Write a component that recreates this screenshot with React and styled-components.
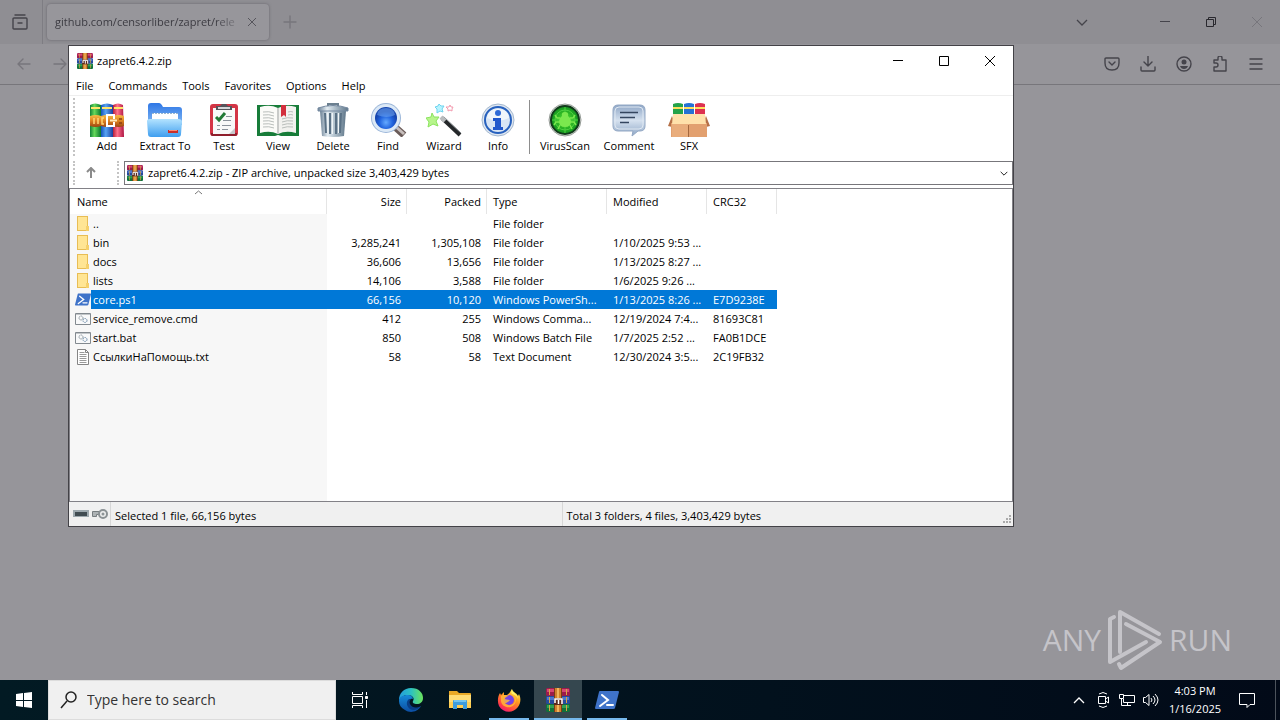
import React from 'react';
import styled, { createGlobalStyle } from 'styled-components';

const GlobalStyle = createGlobalStyle`
  * {
    box-sizing: border-box;
  }

  body {
    margin: 0;
    font-family: 'Open Sans', 'Noto Sans', sans-serif;
    font-size: 11px;
    line-height: 16px;
    color: #000;
  }

  button,
  select,
  input {
    margin: 0;
    padding: 0;
    border: 0;
    background: transparent;
    font: inherit;
    color: inherit;
  }

  svg {
    display: block;
    flex: none;
  }
`;

const Page = styled.div`
  display: flex;
  flex-direction: column;
  height: 100vh;
  overflow: hidden;
`;

const Desktop = styled.main`
  position: relative;
  flex: 1;
  min-height: 0;
  background: #96959a;
`;

/* Dimmed browser behind the archive window */

const TabStrip = styled.div`
  display: flex;
  height: 44px;
  background: #8f8e93;
  color: #3c3b42;
`;

const BrowserButton = styled.button`
  display: flex;
  align-items: center;
  justify-content: center;
  width: ${(props) => props.$width || 36}px;
  height: 100%;
  color: ${(props) => (props.$faint ? '#77767c' : '#45444b')};
`;

const ViewButton = styled(BrowserButton)`
  padding-right: 2px;
  border-right: 1px solid #7e7d83;
`;

const Tab = styled.div`
  display: flex;
  align-items: center;
  width: 222px;
  margin: 4px 3px 4px 4px;
  padding: 0 9px 0 8px;
  border-radius: 4px;
  background: #97969b;
  box-shadow: 0 0 3px #66656b;
`;

const TabTitle = styled.span`
  flex: 1;
  white-space: nowrap;
  mask-image: linear-gradient(to right, #000 85%, transparent);
`;

const Spacer = styled.div`
  flex: 1;
`;

const WindowControls = styled.div`
  display: flex;
  margin-left: 42px;
`;

const BrowserBar = styled.div`
  display: flex;
  height: 41px;
  padding: 0 6px;
  border-bottom: 1px solid #77767b;
  background: #96959a;
`;

const Watermark = styled.div`
  position: absolute;
  right: 48px;
  bottom: 8px;
  display: flex;
  align-items: center;
  gap: 6px;
  height: 64px;
  color: #c5c4c9;
  font-size: 30px;
  font-weight: 400;
  line-height: 64px;
`;

/* Archive window */

const Window = styled.section`
  position: absolute;
  inset: 45px 266px 153px 68px;
  display: flex;
  flex-direction: column;
  border: 1px solid #434247;
  background: #fff;
`;

const TitleBar = styled.header`
  display: flex;
  align-items: center;
  height: 30px;
  padding-left: 8px;
`;

const Title = styled.h1`
  flex: 1;
  margin: 0;
  padding-left: 4px;
  font-size: 11px;
  font-weight: 400;
`;

const CaptionButton = styled.button`
  display: flex;
  align-items: center;
  justify-content: center;
  width: 46px;
  height: 30px;
`;

const MenuBar = styled.nav`
  display: flex;
  height: 20px;
  gap: 15px;
  padding-left: 7px;
  border-bottom: 1px solid #eee;
`;

const ToolBar = styled.div`
  display: flex;
  height: 62px;
  padding: 2px 0 2px 4px;
`;

const Grip = styled.span`
  width: 0;
  margin-right: ${(props) => props.$gap || 0}px;
  border-left: 2px dotted #c4c4c4;
`;

const ToolButton = styled.button`
  display: flex;
  flex-direction: column;
  align-items: center;
  gap: 1px;
  width: ${(props) => props.$width}px;
  padding-top: 5px;
  white-space: nowrap;
`;

const ToolSeparator = styled.span`
  width: 1px;
  margin: 2px 4px 2px 5px;
  background: #8d8d8d;
`;

const AddressRow = styled.div`
  display: flex;
  height: 30px;
  padding: 3px 0 3px 4px;
`;

const UpButton = styled.button`
  display: flex;
  align-items: center;
  justify-content: center;
  width: 32px;
  margin-right: 10px;
`;

const AddressBox = styled.label`
  display: flex;
  align-items: center;
  flex: 1;
  gap: 5px;
  padding: 0 4px 0 2px;
  border: 1px solid #77767b;
`;

const AddressSelect = styled.select`
  flex: 1;
  height: 20px;
  appearance: none;
  outline: 0;
`;

const FileList = styled.div`
  flex: 1;
  min-height: 0;
  overflow: hidden;
  border: 1px solid #828187;
  background: linear-gradient(#f7f7f7, #f7f7f7) 0 0 / 257px 100% no-repeat #fff;
`;

const Table = styled.table`
  width: 707px;
  table-layout: fixed;
  border-collapse: separate;
  border-spacing: 0;
  white-space: nowrap;
`;

const HeaderCell = styled.th`
  position: relative;
  height: 25px;
  padding: 0 5px 0 ${(props) => (props.$first ? 7 : 6)}px;
  border-right: 1px solid #e5e5e5;
  background: #fff;
  font-weight: 400;
  text-align: ${(props) => props.$align || 'left'};
`;

const SortMark = styled.svg`
  position: absolute;
  top: 1px;
  left: calc(50% - 4px);
`;

const Row = styled.tr`
  height: 19px;
  color: ${(props) => (props.$selected ? '#fff' : '#000')};
`;

const Cell = styled.td`
  height: 19px;
  padding: 0 6px;
  text-align: ${(props) => props.$align || 'left'};
  background: ${(props) => (props.$selected ? '#0078d7' : 'transparent')};
`;

const NameCell = styled.td`
  height: 19px;
  padding: 0 0 0 5px;
`;

const NameBox = styled.div`
  display: flex;
  align-items: center;
  height: 19px;
`;

const FileName = styled.span`
  flex: 1;
  padding-left: 2px;
  line-height: 19px;
  background: ${(props) => (props.$selected ? '#0078d7' : 'transparent')};
`;

const StatusBar = styled.footer`
  display: flex;
  height: 24px;
  background: #f0f0f0;
`;

const StatusIcons = styled.div`
  display: flex;
  align-items: center;
  gap: 3px;
  width: 41px;
  padding-left: 4px;
`;

const StatusText = styled.div`
  display: flex;
  justify-content: space-between;
  flex: 1;
  padding-left: 4px;
  border-left: 1px solid #d7d7d7;
  line-height: 27px;
`;

const SizeGrip = styled.svg`
  align-self: flex-end;
`;

/* Taskbar */

const TaskBar = styled.footer`
  display: flex;
  height: 40px;
  background: linear-gradient(to right, #021a23, #02111d 60%, #020a18);
  color: #fff;
`;

const TaskButton = styled.button`
  display: flex;
  align-items: center;
  justify-content: center;
  width: ${(props) => props.$width || 48}px;
  height: 40px;
  background: ${(props) => (props.$active ? '#35474f' : 'transparent')};
`;

const SearchBox = styled.label`
  display: flex;
  align-items: center;
  gap: 10px;
  width: 288px;
  padding-left: 11px;
  border: 1px solid #dcdcdc;
  background: #f0f0f0;
  color: #222;
`;

const SearchInput = styled.input`
  width: 230px;
  outline: 0;
  font-size: 14px;
  line-height: 20px;

  &::placeholder {
    color: #333;
    opacity: 1;
  }
`;

const RunningApps = styled.div`
  display: flex;
  gap: 1px;
  margin-left: 3px;
`;

const AppButton = styled(TaskButton)`
  position: relative;

  &::after {
    content: '';
    position: absolute;
    bottom: 0;
    left: ${(props) => (props.$active ? 0 : 4)}px;
    right: ${(props) => (props.$active ? 0 : 4)}px;
    height: 2px;
    background: ${(props) => (props.$running ? '#76b9ed' : 'transparent')};
  }
`;

const Clock = styled.time`
  width: 64px;
  padding-top: 2px;
  text-align: center;
  line-height: 18px;
`;

const ShowDesktop = styled.button`
  width: 5px;
  margin-left: 8px;
  border-left: 1px solid #4c535c;
`;

/* Icons */

function WinrarIcon({ size }) {
  return (
    <svg width={size} height={size} viewBox="0 0 24 24">
      <path fill="#9c1c4c" d="M1 0h22l1 2v5l-1 1H1L0 7V1z" />
      <path fill="#d64674" d="M1 1h22v3H1z" />
      <path fill="#274a9c" d="M1 8h22l1 1v6l-1 1H1l-1-1V9z" />
      <path fill="#4d76cf" d="M1 9h22v3H1z" />
      <path fill="#11703a" d="M1 16h22l1 1v6l-1 1H1l-1-1v-6z" />
      <path fill="#2fa052" d="M1 17h22v3H1z" />
      <path fill="#d9a544" d="M3 1h1v6H3zm0 8h1v6H3zm0 8h1v6H3zM20 1h1v6h-1zm0 8h1v6h-1zm0 8h1v6h-1z" />
      <path fill="#7c3b17" d="M8 0h8v24H8z" />
      <path fill="#cf7f2e" d="M9 0h6v24H9z" />
      <path fill="#f0b45c" d="M11 0h2v24h-2z" />
      <path fill="#5c2a1c" d="M8 10h9v7H8z" />
      <path fill="none" stroke="#fff" strokeWidth="1.500" d="M9 15v-4h7v5M12.500 12v4" />
    </svg>
  );
}

function AddIcon() {
  return (
    <svg width="34" height="34" viewBox="0 0 34 34">
      <defs>
        <linearGradient id="addGreen">
          <stop offset="0" stopColor="#12813a" />
          <stop offset=".4" stopColor="#66d85a" />
          <stop offset="1" stopColor="#08762e" />
        </linearGradient>
        <linearGradient id="addBlue">
          <stop offset="0" stopColor="#1452b9" />
          <stop offset=".4" stopColor="#57a3f3" />
          <stop offset="1" stopColor="#1a3d9d" />
        </linearGradient>
        <linearGradient id="addRed">
          <stop offset="0" stopColor="#b51f39" />
          <stop offset=".4" stopColor="#ff728c" />
          <stop offset="1" stopColor="#ae1544" />
        </linearGradient>
        <linearGradient id="addBelt" x2="0" y2="1">
          <stop offset="0" stopColor="#f5bd47" />
          <stop offset=".5" stopColor="#dd8020" />
          <stop offset="1" stopColor="#9b4513" />
        </linearGradient>
      </defs>
      <path fill="url(#addGreen)" d="M0 2q5-3 11 0v32H0z" />
      <path fill="url(#addBlue)" d="M11 2q6-3 12 0v32H11z" />
      <path fill="url(#addRed)" d="M23 2q5-3 10 0l1 32H23z" />
      <path fill="#ffe66b" d="M1 4h9v2H1zm11 0h10v2H12zm12 0h9v2h-9z" />
      <path fill="url(#addBelt)" d="M0 13q6-2 11 0 6-2 12 0 6-2 11 0v10q-5 2-11 0-6 2-12 0-5 2-11 0z" />
      <path fill="none" stroke="#ffd676" strokeWidth="1.500" d="M4 15v6M8 15v6M14 15h-2v6h2" />
      <path fill="none" stroke="#fff" strokeWidth="2" d="M24 16v-4h-7v11h7v-4" />
      <path stroke="#ffe9b8" strokeWidth="2" d="M20 17.500h7" />
      <path stroke="#8a3f12" strokeWidth="1.500" d="M29 16h3M29 20h3" />
    </svg>
  );
}

function ExtractIcon() {
  return (
    <svg width="38" height="34" viewBox="0 0 38 34">
      <defs>
        <linearGradient id="extractBack" x2="0" y2="1">
          <stop offset="0" stopColor="#2e77e6" />
          <stop offset="1" stopColor="#82b9f4" />
        </linearGradient>
        <linearGradient id="extractFront" x2="0" y2="1">
          <stop offset="0" stopColor="#b3e3ff" />
          <stop offset="1" stopColor="#3e9eef" />
        </linearGradient>
      </defs>
      <path fill="url(#extractBack)" d="M2 3q0-3 3-3h8q2 0 4 4h16q3 0 3 3v15H2z" />
      <path fill="#fff" d="M6 10h26v9H6z" />
      <path fill="none" stroke="#97b5cf" strokeDasharray="2 1" d="M6 10.500h26" />
      <path fill="url(#extractFront)" d="M1 18q0-2 3-2h28q4 0 4 3l-1 12q0 3-3 3H5q-3 0-3-3z" />
      <path fill="#c9302a" d="M22 27h10v3H22z" />
      <path fill="#ff8a75" d="M23 27h8v1h-8z" />
    </svg>
  );
}

function TestIcon() {
  return (
    <svg width="30" height="34" viewBox="0 0 30 34">
      <rect x="1" y="1" width="28" height="32" rx="3" fill="#d33545" />
      <path fill="#8f1f2c" d="M2 30h26v2q0 1-2 1H4q-2 0-2-1z" />
      <path fill="#f8f9f8" d="M4 5h22v26H4z" />
      <path fill="#c6c9cb" d="m26 25-6 6h6z" />
      <path fill="#55555b" d="M7 3h4l2-2h4l2 2h4v4H7z" />
      <path fill="#d5d7da" d="M9 4h12v2H9z" />
      <path fill="none" stroke="#227a35" strokeWidth="3" d="m7 14 3 3 6-7" />
      <path stroke="#8a929a" d="M17 13.500h6M14 17.500h8M8 22.500h3M13 22.500h9M8 26.500h3M13 26.500h6" />
    </svg>
  );
}

function ViewIcon() {
  return (
    <svg width="42" height="34" viewBox="0 0 42 34">
      <path fill="#177c39" d="M0 2h42v31H24l-3-1-3 1H0z" />
      <path fill="#fbfbf8" d="M3 4q10-3 18 1v26q-8-4-18-1z" />
      <path fill="#f2f2ef" d="M39 4q-10-3-18 1v26q8-4 18-1z" />
      <path fill="#c9cbc9" d="M20 5h2v26h-2z" />
      <path fill="none" stroke="#b9bebb" d="M6 9q6-1 11 1M6 12q6-1 11 1M6 15q6-1 11 1M6 18q6-1 11 1M6 21q6-1 11 1M6 24q6-1 11 1M25 16q5-2 11-1M25 19q5-2 11-1M25 22q5-2 11-1M25 25q5-2 11-1M31 9q3-1 5 0M31 12q3-1 5 0" />
      <path fill="#d22f3d" d="M24 2h5v12l-2-2-3 2z" />
    </svg>
  );
}

function DeleteIcon() {
  return (
    <svg width="32" height="34" viewBox="0 0 32 34">
      <defs>
        <linearGradient id="binMetal">
          <stop offset="0" stopColor="#6b8195" />
          <stop offset=".3" stopColor="#e3ecf2" />
          <stop offset=".6" stopColor="#a9bac6" />
          <stop offset="1" stopColor="#60778a" />
        </linearGradient>
      </defs>
      <path fill="url(#binMetal)" d="M3 8h26l-2 25q-11 2-22 0z" />
      <path fill="none" stroke="#5a7185" strokeWidth="2" d="m8 10 1 20M13 10v21M19 10v21M24 10l-1 20" />
      <path stroke="#eff5f7" d="m10.500 10 .5 20M15.500 10v21M21.500 10v20" />
      <path fill="none" stroke="#6c8090" strokeWidth="2" d="M11 4V1h10v3" />
      <path fill="url(#binMetal)" stroke="#7589a0" d="M1 8V5q15-5 30 0v3z" />
    </svg>
  );
}

function FindIcon() {
  return (
    <svg width="38" height="34" viewBox="0 0 38 34">
      <defs>
        <radialGradient id="findGlass" cx=".5" cy=".7">
          <stop offset="0" stopColor="#65aaff" />
          <stop offset=".6" stopColor="#2164de" />
          <stop offset="1" stopColor="#1645ae" />
        </radialGradient>
      </defs>
      <path stroke="#6a5b58" strokeWidth="7" d="m26 24 9 8" />
      <path stroke="#c7bfbd" strokeWidth="3" d="m26 23 9 8" />
      <circle cx="17" cy="15" r="15" fill="#9bb6d9" />
      <circle cx="17" cy="15" r="14" fill="#dce9f6" />
      <circle cx="17" cy="15" r="11" fill="url(#findGlass)" />
      <path fill="#77aff6" opacity=".5" d="M8 12q1-7 9-7t9 7q-8 4-18 0" />
    </svg>
  );
}

function WizardIcon() {
  return (
    <svg width="36" height="34" viewBox="0 0 36 34">
      <path stroke="#25282a" strokeWidth="4" d="m16 15 18 17" />
      <path stroke="#868b8f" strokeWidth="1" d="m18 14 17 16" />
      <path stroke="#b8bbbd" strokeWidth="4" d="m15 14 4 4" />
      <path fill="#b7f58b" stroke="#8be35f" d="m6 10 2 4 5 0-3 4 2 5-5-2-5 3 1-5-3-4 5-1z" />
      <path fill="#b7f4ff" stroke="#6fd3ee" d="m13 1 2 2 3 0-2 3 1 3-3-1-3 2v-4l-2-2 3-1z" />
      <path fill="#fff" stroke="#f29aae" d="m24 2 1 2 2 0-1 2v2l-2-1-2 1v-2l-2-2h3z" />
    </svg>
  );
}

function InfoIcon() {
  return (
    <svg width="34" height="34" viewBox="0 0 34 34">
      <circle cx="17" cy="17" r="16" fill="#dfe7f1" stroke="#a4b8cf" />
      <circle cx="17" cy="17" r="13" fill="#d8e5f5" stroke="#2761be" strokeWidth="2" />
      <path fill="#f1f6fb" d="M6 15Q7 6 17 6t11 9q-11 5-22 0" />
      <circle cx="17" cy="10" r="3" fill="#2f6ad6" />
      <path fill="#2158cc" d="M12 15h8v9h2v3H12v-3h2v-6h-2z" />
    </svg>
  );
}

function VirusIcon() {
  return (
    <svg width="34" height="34" viewBox="0 0 34 34">
      <defs>
        <radialGradient id="virusGlow">
          <stop offset="0" stopColor="#5be83a" />
          <stop offset=".6" stopColor="#2bb324" />
          <stop offset="1" stopColor="#129421" />
        </radialGradient>
      </defs>
      <circle cx="17" cy="17" r="16" fill="#e1e4e1" stroke="#959b96" />
      <circle cx="17" cy="17" r="14" fill="url(#virusGlow)" stroke="#123b1b" strokeWidth="2" />
      <path stroke="#4fd141" fill="none" d="M17 4v26M4 17h26" />
      <circle cx="17" cy="17" r="10" stroke="#4fd141" fill="none" />
      <path fill="#7be84e" d="M14 13q-1-4 3-4t3 4q3 2 3 5 0 6-6 6t-6-6q0-3 3-5" />
      <path fill="none" stroke="#7be84e" strokeWidth="1.500" d="M12 15H9l-2-3M12 19H8l-2 3M12 22l-2 4M22 15h3l2-3M22 19h4l2 3M22 22l2 4" />
    </svg>
  );
}

function CommentIcon() {
  return (
    <svg width="34" height="34" viewBox="0 0 34 34">
      <defs>
        <linearGradient id="commentFill" x2="0" y2="1">
          <stop offset="0" stopColor="#8ea6c6" />
          <stop offset=".5" stopColor="#d5e1ef" />
          <stop offset="1" stopColor="#8fa7c6" />
        </linearGradient>
      </defs>
      <path fill="url(#commentFill)" stroke="#93a8c4" d="M6 2h22q5 0 5 5v16q0 5-5 5h-2l-6 5 1-5H6q-5 0-5-5V7q0-5 5-5z" />
      <path fill="none" stroke="#dfe8f2" d="M7 4h20q4 0 4 4v14q0 4-4 4H7q-4 0-4-4V8q0-4 4-4z" />
      <path stroke="#34465f" strokeWidth="1.500" d="M8 9.500h18M8 14.500h15M8 19.500h9" />
    </svg>
  );
}

function SfxIcon() {
  return (
    <svg width="42" height="34" viewBox="0 0 42 34">
      <path fill="#25a34a" d="M5 1q5-2 10 0v14H5z" />
      <path fill="#2672d5" d="M16 1q5-2 10 0v14H16z" />
      <path fill="#dd3150" d="M27 1q5-2 10 0v14H27z" />
      <path fill="#ffe05f" d="M5 4h10v2H5zm11 0h10v2H16zm11 0h10v2H27z" />
      <path fill="#b57047" d="m4 13 2 5-2 6-4-1zM38 13l-2 5 2 6 4-1z" />
      <path fill="#e2a06f" d="M3 20h36v14H3z" />
      <path fill="#e9ad7c" d="M4 21h17v13H4z" />
      <path fill="#ffe1ab" d="M5 11h32l1 10H4z" />
      <path stroke="#a4683e" d="M20.500 22v12" />
    </svg>
  );
}

function FolderIcon() {
  return (
    <svg width="16" height="18" viewBox="0 0 16 18">
      <path fill="#e8bd54" d="M2 1h11v15H2z" />
      <path fill="#ffe594" d="M3 2h9v13H3z" />
      <path fill="#f5d06b" d="M11 11h3v5h-3z" />
    </svg>
  );
}

function PowerShellIcon({ width = 16, height = 13 }) {
  return (
    <svg width={width} height={height} viewBox="0 0 24 18">
      <path fill="#3f73c9" d="M5 0h18q1 0 1 1l-4 16q0 1-2 1H1q-1 0-1-1L4 1q0-1 1-1z" />
      <path fill="none" stroke="#fff" strokeWidth="2" strokeLinecap="round" d="m7 4 6 5-8 6M12 14h6" />
    </svg>
  );
}

function ScriptIcon() {
  return (
    <svg width="16" height="16" viewBox="0 0 16 16">
      <path fill="#f8f9fa" stroke="#82898f" d="M.5 2.500h15v11H.5z" />
      <path fill="#c1c5c8" d="M1 3h14v1H1z" />
      <circle cx="6" cy="7" r="2" fill="none" stroke="#8d989f" strokeDasharray="1.500 .5" />
      <circle cx="10" cy="9.500" r="2" fill="none" stroke="#718fac" strokeDasharray="1.500 .5" />
    </svg>
  );
}

function TextIcon() {
  return (
    <svg width="16" height="16" viewBox="0 0 16 16">
      <path fill="#fff" stroke="#858585" d="M2.500.5h8l3 3v12h-11z" />
      <path stroke="#9a9a9a" d="M4.500 3.500h5M4.500 5.500h7M4.500 7.500h7M4.500 9.500h7M4.500 11.500h7M4.500 13.500h7" />
      <path fill="none" stroke="#858585" d="M10.500.5v3h3" />
    </svg>
  );
}

function EdgeIcon() {
  return (
    <svg width="24" height="24" viewBox="0 0 24 24">
      <defs>
        <linearGradient id="edgeTop">
          <stop offset="0" stopColor="#239cdd" />
          <stop offset=".5" stopColor="#2cc1c2" />
          <stop offset="1" stopColor="#6ce45b" />
        </linearGradient>
        <linearGradient id="edgeBase" x2="0" y2="1">
          <stop offset="0" stopColor="#168bd9" />
          <stop offset="1" stopColor="#0c4da2" />
        </linearGradient>
      </defs>
      <path fill="url(#edgeTop)" d="M0 12C0 5 5 0 12 0c8 0 12 5 12 10 0 4-3 6-6 6-3 0-5-1-4-3 2-3-1-6-5-6-5 0-9 3-9 7z" />
      <path fill="url(#edgeBase)" d="M0 13c0-4 4-6 9-6 3 0 5 2 5 4-4-1-5 2-4 5 1 4 7 6 12 2-4 7-12 7-16 4C2 20 0 17 0 13z" />
      <path fill="#093e86" d="M10 11c-3 2-3 7 1 10 3 2 8 1 11-3-5 3-10 1-11-2-1-2 0-4 1-5z" />
    </svg>
  );
}

function ExplorerIcon() {
  return (
    <svg width="24" height="20" viewBox="0 0 24 20">
      <path fill="#e9a927" d="M1 1h8l2 2h11q1 0 1 1v5H1z" />
      <path fill="#ffdc75" d="M1 5h22v13H1z" />
      <path fill="#ffce52" d="M1 12h22v6H1z" />
      <path fill="#3d9cdc" d="M5 11q0-1 1-1h12q1 0 1 1v8h-4v-4H9v4H5z" />
      <path fill="#73c5ef" d="M6 10h12v2H6z" />
    </svg>
  );
}

function FirefoxIcon() {
  return (
    <svg width="24" height="24" viewBox="0 0 24 24">
      <defs>
        <linearGradient id="foxFire" x1=".8" y1="0" x2=".2" y2="1">
          <stop offset="0" stopColor="#fff44f" />
          <stop offset=".4" stopColor="#ff9720" />
          <stop offset=".8" stopColor="#ff3b47" />
          <stop offset="1" stopColor="#e31587" />
        </linearGradient>
      </defs>
      <path fill="url(#foxFire)" d="M3 5l1 2 3-3v3h3c2-1 3-3 5-6 0 3 5 4 6 7l1-2c2 4 2 9-1 13-5 7-15 6-19-1C0 13 1 8 3 5z" />
      <circle cx="12" cy="12" r="5" fill="#7542e5" />
      <path fill="#ffbd3a" d="M4 8c3-2 5 0 8-1-1 2-4 2-4 4 2 1 4 0 5 2-2 0-2 2-5 2 3 4 10 2 10-3 0-3-2-5-4-6 3 0 5 3 5 6-1 10-14 9-15 1z" opacity=".8" />
      <path fill="#fff064" d="M15 1c0 3 6 5 6 10-1-3-3-4-6-5-1-1-1-3 0-5z" />
    </svg>
  );
}

function CloseGlyph({ size = 10 }) {
  return (
    <svg width={size} height={size} viewBox="0 0 10 10">
      <path stroke="currentColor" d="m0 0 10 10M10 0 0 10" />
    </svg>
  );
}

function ChevronGlyph({ up, width = 12 }) {
  return (
    <svg width={width} height={width / 2 + 1} viewBox="0 0 12 7">
      <path fill="none" stroke="currentColor" strokeWidth="1.300" d={up ? 'm1 6 5-5 5 5' : 'm1 1 5 5 5-5'} />
    </svg>
  );
}

function LineIcon({ size = 16, d }) {
  return (
    <svg width={size} height={size} viewBox="0 0 16 16" fill="none" stroke="currentColor" strokeWidth="1.400" strokeLinecap="round" strokeLinejoin="round">
      <path d={d} />
    </svg>
  );
}

const tools = [
  { label: 'Add', width: 50, Icon: AddIcon },
  { label: 'Extract To', width: 66, Icon: ExtractIcon },
  { label: 'Test', width: 52, Icon: TestIcon },
  { label: 'View', width: 56, Icon: ViewIcon },
  { label: 'Delete', width: 54, Icon: DeleteIcon },
  { label: 'Find', width: 56, Icon: FindIcon },
  { label: 'Wizard', width: 56, Icon: WizardIcon },
  { label: 'Info', width: 52, Icon: InfoIcon },
];

const extraTools = [
  { label: 'VirusScan', width: 62, Icon: VirusIcon },
  { label: 'Comment', width: 66, Icon: CommentIcon },
  { label: 'SFX', width: 54, Icon: SfxIcon },
];

const columns = [
  { label: 'Name', width: 257 },
  { label: 'Size', width: 80, align: 'right' },
  { label: 'Packed', width: 80, align: 'right' },
  { label: 'Type', width: 120 },
  { label: 'Modified', width: 100 },
  { label: 'CRC32', width: 70 },
];

const files = [
  { name: '..', Icon: FolderIcon, type: 'File folder' },
  { name: 'bin', Icon: FolderIcon, size: '3,285,241', packed: '1,305,108', type: 'File folder', modified: '1/10/2025 9:53 ...' },
  { name: 'docs', Icon: FolderIcon, size: '36,606', packed: '13,656', type: 'File folder', modified: '1/13/2025 8:27 ...' },
  { name: 'lists', Icon: FolderIcon, size: '14,106', packed: '3,588', type: 'File folder', modified: '1/6/2025 9:26 ...' },
  { name: 'core.ps1', Icon: PowerShellIcon, size: '66,156', packed: '10,120', type: 'Windows PowerSh...', modified: '1/13/2025 8:26 ...', crc: 'E7D9238E', selected: true },
  { name: 'service_remove.cmd', Icon: ScriptIcon, size: '412', packed: '255', type: 'Windows Comma...', modified: '12/19/2024 7:4...', crc: '81693C81' },
  { name: 'start.bat', Icon: ScriptIcon, size: '850', packed: '508', type: 'Windows Batch File', modified: '1/7/2025 2:52 ...', crc: 'FA0B1DCE' },
  { name: 'СсылкиНаПомощь.txt', Icon: TextIcon, size: '58', packed: '58', type: 'Text Document', modified: '12/30/2024 3:5...', crc: '2C19FB32' },
];

const menus = ['File', 'Commands', 'Tools', 'Favorites', 'Options', 'Help'];

const browserActions = [
  { label: 'Pocket', d: 'M2 2h12q1 0 1 1v4q0 7-7 7T1 7V3q0-1 1-1zm3 4 3 3 3-3' },
  { label: 'Downloads', d: 'M8 0v10M4 6l4 4 4-4M1 11v3q0 1 1 1h12q1 0 1-1v-3' },
  { label: 'Account', account: true },
  { label: 'Extensions', d: 'M2 6V4h4V2q0-2 2-2t2 2v2h4v11H2v-4h2q2 0 2-2T4 7H2z' },
  { label: 'Menu', d: 'M2 3h12M2 8h12M2 13h12' },
];

function Browser() {
  return (
    <>
      <TabStrip>
        <ViewButton $width={43} aria-label="Firefox View">
          <LineIcon d="M3 1h10M2 4h12q1 0 1 1v9q0 1-1 1H2q-1 0-1-1V5q0-1 1-1zm4 5h4" />
        </ViewButton>
        <Tab>
          <TabTitle>github.com/censorliber/zapret/rele</TabTitle>
          <BrowserButton $width={16} aria-label="Close tab">
            <CloseGlyph size={8} />
          </BrowserButton>
        </Tab>
        <BrowserButton $faint aria-label="New tab">
          <LineIcon d="M8 2v12M2 8h12" />
        </BrowserButton>
        <Spacer />
        <BrowserButton aria-label="List all tabs">
          <ChevronGlyph />
        </BrowserButton>
        <WindowControls>
          <BrowserButton $width={46} aria-label="Minimize browser">
            <svg width="10" height="10"><path stroke="currentColor" d="M0 4.500h10" /></svg>
          </BrowserButton>
          <BrowserButton $width={46} aria-label="Restore browser">
            <svg width="10" height="10" fill="none" stroke="#29282e">
              <path d="M.5 2.500h7v7h-7zM2.500 2.500v-2h7v7h-2" />
            </svg>
          </BrowserButton>
          <BrowserButton $width={46} $faint aria-label="Close browser">
            <CloseGlyph />
          </BrowserButton>
        </WindowControls>
      </TabStrip>
      <BrowserBar>
        <BrowserButton $faint aria-label="Back">
          <LineIcon d="M14 8H2M7 3 2 8l5 5" />
        </BrowserButton>
        <BrowserButton $faint aria-label="Forward">
          <LineIcon d="M2 8h12M9 3l5 5-5 5" />
        </BrowserButton>
        <Spacer />
        {browserActions.map(({ label, d, account }) => (
          <BrowserButton key={label} aria-label={label}>
            {account ? (
              <svg width="16" height="16" viewBox="0 0 16 16">
                <circle cx="8" cy="8" r="7" fill="none" stroke="currentColor" strokeWidth="1.400" />
                <circle cx="8" cy="6" r="2.500" fill="currentColor" />
                <path fill="currentColor" d="M4 10h8q-1 3-4 3t-4-3" />
              </svg>
            ) : (
              <LineIcon d={d} />
            )}
          </BrowserButton>
        ))}
      </BrowserBar>
    </>
  );
}

function ArchiveWindow() {
  return (
    <Window aria-label="zapret6.4.2.zip">
      <TitleBar>
        <WinrarIcon size={16} />
        <Title>zapret6.4.2.zip</Title>
        <CaptionButton aria-label="Minimize">
          <svg width="10" height="10"><path stroke="#000" d="M0 4.500h10" /></svg>
        </CaptionButton>
        <CaptionButton aria-label="Maximize">
          <svg width="10" height="10"><path fill="none" stroke="#000" d="M.5.5h9v9h-9z" /></svg>
        </CaptionButton>
        <CaptionButton aria-label="Close">
          <CloseGlyph />
        </CaptionButton>
      </TitleBar>
      <MenuBar>
        {menus.map((menu) => (
          <button key={menu}>{menu}</button>
        ))}
      </MenuBar>
      <ToolBar>
        <Grip $gap={7} />
        {tools.map(({ label, width, Icon }) => (
          <ToolButton key={label} $width={width}>
            <Icon />
            {label}
          </ToolButton>
        ))}
        <ToolSeparator />
        {extraTools.map(({ label, width, Icon }) => (
          <ToolButton key={label} $width={width}>
            <Icon />
            {label}
          </ToolButton>
        ))}
      </ToolBar>
      <AddressRow>
        <Grip />
        <UpButton aria-label="Up one level">
          <svg width="10" height="12" fill="none" stroke="#8a8a8a" strokeWidth="2">
            <path d="M5 11V1M1 5l4-4 4 4" />
          </svg>
        </UpButton>
        <Grip $gap={5} />
        <AddressBox>
          <WinrarIcon size={16} />
          <AddressSelect aria-label="Archive path">
            <option>zapret6.4.2.zip - ZIP archive, unpacked size 3,403,429 bytes</option>
          </AddressSelect>
          <ChevronGlyph width={8} />
        </AddressBox>
      </AddressRow>
      <FileList>
        <Table>
          <colgroup>
            {columns.map(({ label, width }) => (
              <col key={label} width={width} />
            ))}
          </colgroup>
          <thead>
            <tr>
              {columns.map(({ label, align }, index) => (
                <HeaderCell key={label} $align={align} $first={index === 0}>
                  {label}
                  {index === 0 && (
                    <SortMark width="9" height="5">
                      <path fill="none" stroke="#777" d="m1 4 3.500-3L8 4" />
                    </SortMark>
                  )}
                </HeaderCell>
              ))}
            </tr>
          </thead>
          <tbody>
            {files.map((file) => (
              <Row key={file.name} $selected={file.selected}>
                <NameCell>
                  <NameBox>
                    <file.Icon />
                    <FileName $selected={file.selected}>{file.name}</FileName>
                  </NameBox>
                </NameCell>
                <Cell $align="right" $selected={file.selected}>{file.size}</Cell>
                <Cell $align="right" $selected={file.selected}>{file.packed}</Cell>
                <Cell $selected={file.selected}>{file.type}</Cell>
                <Cell $selected={file.selected}>{file.modified}</Cell>
                <Cell $selected={file.selected}>{file.crc}</Cell>
              </Row>
            ))}
          </tbody>
        </Table>
      </FileList>
      <StatusBar>
        <StatusIcons>
          <svg width="16" height="16">
            <path fill="#9da8ae" d="M0 4h16v7H0z" />
            <path fill="#414c52" d="M2 6h12v4H2z" />
          </svg>
          <svg width="16" height="16">
            <path fill="#aeb3b5" stroke="#777d80" d="M.5 5.500h9v3h-5v2H.5z" />
            <circle cx="11" cy="8" r="4" fill="#eee" stroke="#8b9194" strokeWidth="2" />
            <circle cx="11" cy="8" r="1.500" fill="#8d9497" />
          </svg>
        </StatusIcons>
        <StatusText>Selected 1 file, 66,156 bytes</StatusText>
        <StatusText>
          Total 3 folders, 4 files, 3,403,429 bytes
          <SizeGrip width="12" height="12" fill="#aaa">
            <path d="M8 1h2v2H8zM5 4h2v2H5zM8 4h2v2H8zM2 7h2v2H2zM5 7h2v2H5zM8 7h2v2H8z" />
          </SizeGrip>
        </StatusText>
      </StatusBar>
    </Window>
  );
}

function WindowsTaskBar() {
  return (
    <TaskBar>
      <TaskButton aria-label="Start">
        <svg width="16" height="16" fill="#fff">
          <path d="m0 2 7-1v7H0zM8 1l8-1v8H8zM0 9h7v6l-7-1zM8 9h8v7l-8-1z" />
        </svg>
      </TaskButton>
      <SearchBox>
        <svg width="17" height="18" fill="none" stroke="#222" strokeWidth="1.500">
          <circle cx="11" cy="6" r="5" />
          <path d="m7 10-6 7" />
        </svg>
        <SearchInput aria-label="Search" placeholder="Type here to search" />
      </SearchBox>
      <TaskButton aria-label="Task View">
        <svg width="16" height="16" fill="none" stroke="#fff">
          <path d="M.5 0v2.500h10V0M.5 4.500h10v7H.5zM.5 16v-2.500h10V16M14.500 0v3M14.500 8v8" />
          <path fill="#fff" d="M13.500 4.500h2v2h-2z" />
        </svg>
      </TaskButton>
      <RunningApps>
        <AppButton aria-label="Microsoft Edge"><EdgeIcon /></AppButton>
        <AppButton aria-label="File Explorer"><ExplorerIcon /></AppButton>
        <AppButton aria-label="Firefox" $running><FirefoxIcon /></AppButton>
        <AppButton aria-label="WinRAR" $running $active><WinrarIcon size={24} /></AppButton>
        <AppButton aria-label="PowerShell" $running><PowerShellIcon width={24} height={18} /></AppButton>
      </RunningApps>
      <Spacer />
      <TaskButton $width={24} aria-label="Show hidden icons"><ChevronGlyph up /></TaskButton>
      <TaskButton $width={24} aria-label="Meet Now">
        <svg width="12" height="16" fill="none" stroke="#fff">
          <path d="M2 2q4-3 8 0M2 14q4 3 8 0M1.500 4.500h7v7h-7zM8.500 7l3-2v6l-3-2" />
        </svg>
      </TaskButton>
      <TaskButton $width={24} aria-label="Network">
        <svg width="16" height="14" fill="none" stroke="#fff">
          <path d="M5 2.500h10.500v7h-11V6M8.500 10v2.500M5 12.500h7M.5 1.500h4v4h-4zM2.500 6v6.500h3" />
        </svg>
      </TaskButton>
      <TaskButton $width={24} aria-label="Volume">
        <svg width="16" height="14" fill="none" stroke="#fff">
          <path d="M.5 4.500h2L6 1.500v11l-3.500-3h-2zM8 5q2 2 0 4M10 3q4 4 0 8M12 1q6 6 0 12" />
        </svg>
      </TaskButton>
      <Clock>
        4:03 PM
        <br />
        1/16/2025
      </Clock>
      <TaskButton $width={40} aria-label="Notifications">
        <svg width="16" height="16" fill="none" stroke="#fff">
          <path d="M.5 1.500h15v11H11l-3 3v-3H.5z" />
        </svg>
      </TaskButton>
      <ShowDesktop aria-label="Show desktop" />
    </TaskBar>
  );
}

export default function App() {
  return (
    <Page>
      <GlobalStyle />
      <Desktop>
        <Browser />
        <Watermark>
          <span>ANY</span>
          <svg width="56" height="62" viewBox="0 0 56 62" fill="none" stroke="#c5c4c9" strokeWidth="4" strokeLinejoin="round" strokeLinecap="round">
            <path d="M7 8 3 10v43l36-20" />
            <path d="M13 43V3l39 22" />
            <path d="m19 15 34 18-39 26-2-4" />
          </svg>
          <span>RUN</span>
        </Watermark>
        <ArchiveWindow />
      </Desktop>
      <WindowsTaskBar />
    </Page>
  );
}
